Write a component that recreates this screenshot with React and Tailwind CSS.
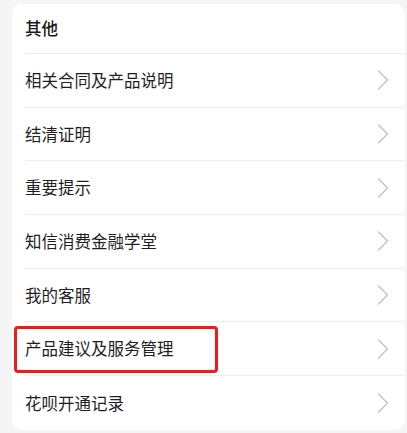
import { ChevronRight } from "lucide-react";

const items = [
  "相关合同及产品说明",
  "结清证明",
  "重要提示",
  "知信消费金融学堂",
  "我的客服",
  "产品建议及服务管理",
  "花呗开通记录",
];

export default function App() {
  return (
    <div
      className="min-h-[433px] bg-[#f5f5f5] pt-[4px] pl-[12px] pr-[2px]"
      style={{ fontFamily: '"Noto Sans CJK SC", "Noto Sans", sans-serif' }}
    >
      <div className="relative rounded-[10px] bg-white">
        <div className="ml-[13px] flex h-[50px] items-center border-b border-[#eeeeee] text-[16.5px] font-medium text-[#1a1a1a]">
          其他
        </div>
        {items.map((label, i) => (
          <div
            key={label}
            className={`ml-[13px] flex h-[53.7px] items-center justify-between pr-[4px] text-[16.5px] text-[#1f1f1f] ${
              i < items.length - 1 ? "border-b border-[#eeeeee]" : ""
            }`}
          >
            <span>{label}</span>
            <ChevronRight className="h-[36px] w-[36px] text-[#c2c2c2]" strokeWidth={0.85} />
          </div>
        ))}

        {/* annotation box */}
        <div className="pointer-events-none absolute left-[2px] top-[322px] h-[47px] w-[204px] rounded-[4px] border-[3px] border-[#ee1c1c]" />
      </div>
    </div>
  );
}
